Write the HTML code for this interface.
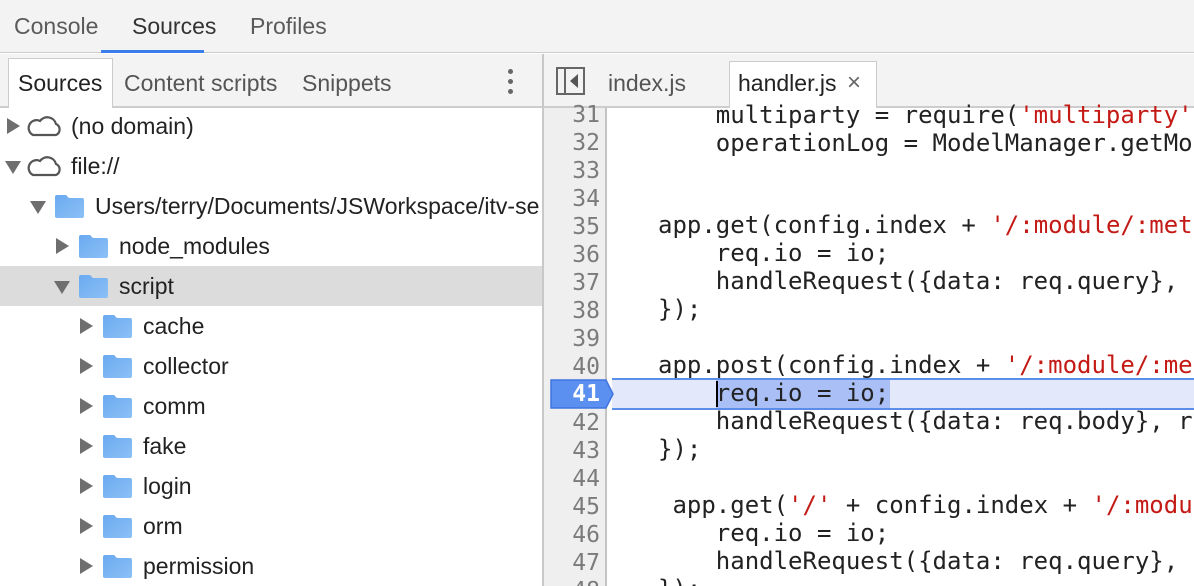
<!DOCTYPE html>
<html><head><meta charset="utf-8"><style>
*{margin:0;padding:0;box-sizing:border-box}
html,body{width:1194px;height:586px;overflow:hidden}
body{background:#fff;font-family:"Liberation Sans",sans-serif;color:#303942;position:relative}
.abs{position:absolute}
.top{left:0;top:0;width:1194px;height:53px;background:#f3f3f3;border-bottom:1px solid #cbcbcb}
.tt{top:13px;font-size:23px;color:#5a5a5a}
.bar2{left:0;top:54px;width:543px;height:54px;background:#f3f3f3;border-bottom:2px solid #cdcdcd}
.vdiv{left:542px;top:54px;width:2px;height:532px;background:#c8c8c8}
.row{left:0;width:542px;height:40px;font-size:23px;line-height:40px;color:#222}
.tri{position:absolute;width:0;height:0}
.tr{border-top:8px solid transparent;border-bottom:8px solid transparent;border-left:13px solid #6e6e6e;top:12px}
.td{border-left:8px solid transparent;border-right:8px solid transparent;border-top:13px solid #6e6e6e;top:15px}
.fold{position:absolute;top:9px;width:29px;height:23px}
.bar3{left:544px;top:54px;width:650px;height:54px;background:#f3f3f3;border-bottom:2px solid #cdcdcd}
.gut{left:544px;top:108px;width:63px;height:478px;background:#efefef;border-right:2px solid #c4c4c4}
.ln{position:absolute;left:544px;width:56px;text-align:right;font-family:"DejaVu Sans Mono",monospace;font-size:23px;color:#7b7b7b;height:28px;line-height:28px}
.cd{position:absolute;left:658px;font-family:"DejaVu Sans Mono",monospace;font-size:24px;color:#222;white-space:pre;height:28px;line-height:28px}
.s{color:#c41a16}
</style></head><body>
<div class="abs top"></div>
<div class="abs tt" style="left:14px">Console</div>
<div class="abs tt" style="left:132px;color:#333">Sources</div>
<div class="abs tt" style="left:250px">Profiles</div>
<div class="abs" style="left:101px;top:50px;width:103px;height:3px;background:#3b7de8"></div>

<div class="abs bar2"></div>
<div class="abs" style="left:8px;top:58px;width:105px;height:50px;background:#fff;border:1px solid #ccc;border-bottom:none"></div>
<div class="abs" style="left:18px;top:70px;font-size:23px;color:#222">Sources</div>
<div class="abs" style="left:124px;top:70px;font-size:23px;color:#555">Content scripts</div>
<div class="abs" style="left:302px;top:70px;font-size:23px;color:#555">Snippets</div>
<div class="abs" style="left:508px;top:69px;width:5px;height:5px;border-radius:50%;background:#666"></div>
<div class="abs" style="left:508px;top:79px;width:5px;height:5px;border-radius:50%;background:#666"></div>
<div class="abs" style="left:508px;top:89px;width:5px;height:5px;border-radius:50%;background:#666"></div>
<div class="abs vdiv"></div>

<svg width="0" height="0" style="position:absolute"><defs>
<linearGradient id="fg" x1="0" y1="0" x2="1" y2="1"><stop offset="0" stop-color="#6aaaf0"/><stop offset="1" stop-color="#8cc0f6"/></linearGradient></defs></svg>

<div class="abs row" style="top:106px"><div class="tri tr" style="left:7px"></div>
<svg class="abs" style="left:25px;top:9px" width="38" height="22" viewBox="0 0 38 22"><path d="M8 20 H31 A6 6 0 0 0 31 9 A9 9 0 0 0 15 6 A7 7 0 0 0 8 20 Z" fill="none" stroke="#555" stroke-width="2.2"/></svg>
<span class="abs" style="left:71px">(no domain)</span></div>
<div class="abs row" style="top:146px"><div class="tri td" style="left:5px"></div>
<svg class="abs" style="left:25px;top:9px" width="38" height="22" viewBox="0 0 38 22"><path d="M8 20 H31 A6 6 0 0 0 31 9 A9 9 0 0 0 15 6 A7 7 0 0 0 8 20 Z" fill="none" stroke="#555" stroke-width="2.2"/></svg>
<span class="abs" style="left:71px">file://</span></div>

<div class="abs row" style="top:186px;overflow:hidden"><div class="tri td" style="left:30px"></div>
<svg class="fold" style="left:55px" viewBox="0 0 29 23"><path d="M2 0 H11 L14 3 H27 Q29 3 29 5 V21 Q29 23 27 23 H2 Q0 23 0 21 V2 Q0 0 2 0Z" fill="url(#fg)"/></svg>
<span class="abs" style="left:95px;white-space:nowrap">Users/terry/Documents/JSWorkspace/itv-se</span></div>

<div class="abs row" style="top:226px"><div class="tri tr" style="left:56px"></div>
<svg class="fold" style="left:79px" viewBox="0 0 29 23"><path d="M2 0 H11 L14 3 H27 Q29 3 29 5 V21 Q29 23 27 23 H2 Q0 23 0 21 V2 Q0 0 2 0Z" fill="url(#fg)"/></svg>
<span class="abs" style="left:119px">node_modules</span></div>
<div class="abs row" style="top:266px;background:#dcdcdc"><div class="tri td" style="left:54px"></div>
<svg class="fold" style="left:79px" viewBox="0 0 29 23"><path d="M2 0 H11 L14 3 H27 Q29 3 29 5 V21 Q29 23 27 23 H2 Q0 23 0 21 V2 Q0 0 2 0Z" fill="url(#fg)"/></svg>
<span class="abs" style="left:119px">script</span></div>

<div class="abs row" style="top:306px"><div class="tri tr" style="left:80px"></div><svg class="fold" style="left:103px" viewBox="0 0 29 23"><path d="M2 0 H11 L14 3 H27 Q29 3 29 5 V21 Q29 23 27 23 H2 Q0 23 0 21 V2 Q0 0 2 0Z" fill="url(#fg)"/></svg><span class="abs" style="left:143px">cache</span></div>
<div class="abs row" style="top:346px"><div class="tri tr" style="left:80px"></div><svg class="fold" style="left:103px" viewBox="0 0 29 23"><path d="M2 0 H11 L14 3 H27 Q29 3 29 5 V21 Q29 23 27 23 H2 Q0 23 0 21 V2 Q0 0 2 0Z" fill="url(#fg)"/></svg><span class="abs" style="left:143px">collector</span></div>
<div class="abs row" style="top:386px"><div class="tri tr" style="left:80px"></div><svg class="fold" style="left:103px" viewBox="0 0 29 23"><path d="M2 0 H11 L14 3 H27 Q29 3 29 5 V21 Q29 23 27 23 H2 Q0 23 0 21 V2 Q0 0 2 0Z" fill="url(#fg)"/></svg><span class="abs" style="left:143px">comm</span></div>
<div class="abs row" style="top:426px"><div class="tri tr" style="left:80px"></div><svg class="fold" style="left:103px" viewBox="0 0 29 23"><path d="M2 0 H11 L14 3 H27 Q29 3 29 5 V21 Q29 23 27 23 H2 Q0 23 0 21 V2 Q0 0 2 0Z" fill="url(#fg)"/></svg><span class="abs" style="left:143px">fake</span></div>
<div class="abs row" style="top:466px"><div class="tri tr" style="left:80px"></div><svg class="fold" style="left:103px" viewBox="0 0 29 23"><path d="M2 0 H11 L14 3 H27 Q29 3 29 5 V21 Q29 23 27 23 H2 Q0 23 0 21 V2 Q0 0 2 0Z" fill="url(#fg)"/></svg><span class="abs" style="left:143px">login</span></div>
<div class="abs row" style="top:506px"><div class="tri tr" style="left:80px"></div><svg class="fold" style="left:103px" viewBox="0 0 29 23"><path d="M2 0 H11 L14 3 H27 Q29 3 29 5 V21 Q29 23 27 23 H2 Q0 23 0 21 V2 Q0 0 2 0Z" fill="url(#fg)"/></svg><span class="abs" style="left:143px">orm</span></div>
<div class="abs row" style="top:546px"><div class="tri tr" style="left:80px"></div><svg class="fold" style="left:103px" viewBox="0 0 29 23"><path d="M2 0 H11 L14 3 H27 Q29 3 29 5 V21 Q29 23 27 23 H2 Q0 23 0 21 V2 Q0 0 2 0Z" fill="url(#fg)"/></svg><span class="abs" style="left:143px">permission</span></div>

<div class="abs bar3"></div>
<svg class="abs" style="left:556px;top:67px" width="30" height="28" viewBox="0 0 30 28"><rect x="1" y="1" width="27" height="26" fill="none" stroke="#666" stroke-width="2"/><line x1="9" y1="1" x2="9" y2="27" stroke="#666" stroke-width="2"/><path d="M22 7 L14 14 L22 21Z" fill="#555"/></svg>
<div class="abs" style="left:608px;top:70px;font-size:23px;color:#555">index.js</div>
<div class="abs" style="left:729px;top:61px;width:148px;height:47px;background:#fff;border:1px solid #ccc;border-bottom:none"></div>
<div class="abs" style="left:738px;top:70px;font-size:23px;color:#222">handler.js</div>
<div class="abs" style="left:847px;top:69px;font-size:24px;color:#666">×</div>

<div class="abs gut"></div>
<div class="ln" style="top:101px">31</div><div class="cd" style="top:101px">    multiparty = require(<span class="s">'multiparty'</span></div>
<div class="ln" style="top:129px">32</div><div class="cd" style="top:129px">    operationLog = ModelManager.getModel</div>
<div class="ln" style="top:157px">33</div>
<div class="ln" style="top:185px">34</div>
<div class="ln" style="top:213px">35</div><div class="cd" style="top:211px">app.get(config.index + <span class="s">'/:module/:method'</span></div>
<div class="ln" style="top:241px">36</div><div class="cd" style="top:239px">    req.io = io;</div>
<div class="ln" style="top:269px">37</div><div class="cd" style="top:267px">    handleRequest({data: req.query}, res</div>
<div class="ln" style="top:297px">38</div><div class="cd" style="top:295px">});</div>
<div class="ln" style="top:325px">39</div>
<div class="ln" style="top:353px">40</div><div class="cd" style="top:351px">app.post(config.index + <span class="s">'/:module/:met</span></div>
<div class="abs" style="left:612px;top:378px;width:582px;height:32px;background:#e3e9fb;border-top:2px solid #5a8ee9;border-bottom:2px solid #5a8ee9"></div>
<svg class="abs" style="left:550px;top:379px" width="64" height="30" viewBox="0 0 64 30"><path d="M1 1 H56 L63 15 L56 29 H1Z" fill="#5b8ff0" stroke="#3f75e0" stroke-width="1.5"/></svg>
<div class="ln" style="top:380px;color:#fff;font-weight:bold">41</div>
<div class="abs" style="left:716px;top:380px;width:174px;height:28px;background:#a9bff5"></div>
<div class="abs" style="left:716px;top:381px;width:2px;height:26px;background:#000"></div>
<div class="cd" style="top:379px">    req.io = io;</div>
<div class="ln" style="top:409px">42</div><div class="cd" style="top:407px">    handleRequest({data: req.body}, res</div>
<div class="ln" style="top:437px">43</div><div class="cd" style="top:435px">});</div>
<div class="ln" style="top:465px">44</div>
<div class="ln" style="top:493px">45</div><div class="cd" style="top:491px"> app.get(<span class="s">'/'</span> + config.index + <span class="s">'/:module</span></div>
<div class="ln" style="top:521px">46</div><div class="cd" style="top:519px">    req.io = io;</div>
<div class="ln" style="top:549px">47</div><div class="cd" style="top:547px">    handleRequest({data: req.query}, res</div>
<div class="ln" style="top:577px">48</div><div class="cd" style="top:575px">});</div>
</body></html>
